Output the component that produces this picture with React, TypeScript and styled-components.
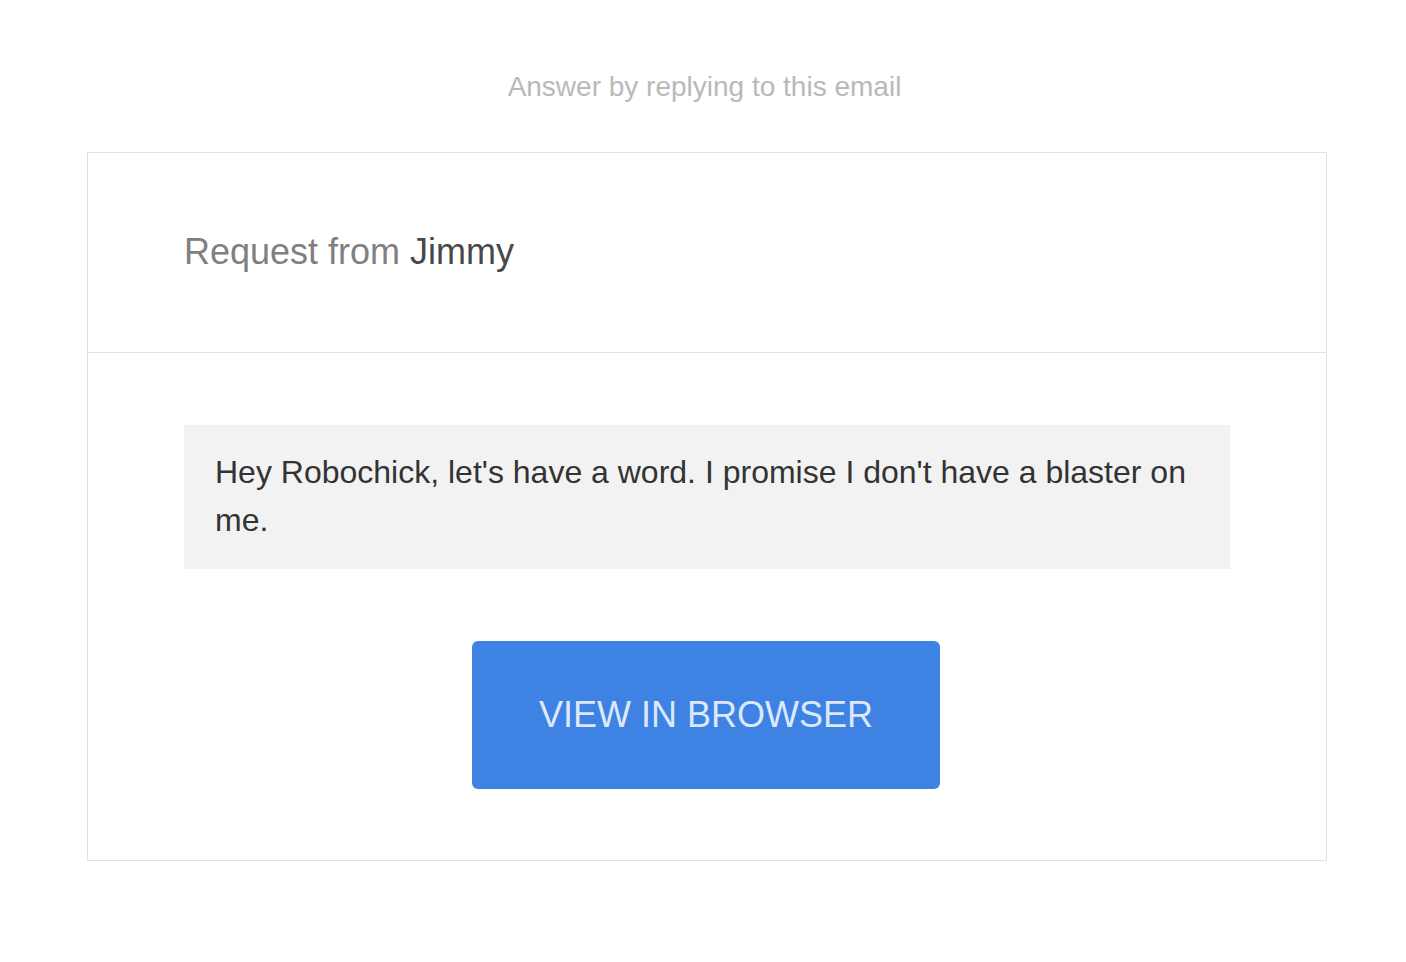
import { createGlobalStyle } from 'styled-components'
import styled from 'styled-components'

const GlobalStyle = createGlobalStyle`
  html, body {
    margin: 0;
    padding: 0;
    background: #ffffff;
    font-family: "Liberation Sans", Arial, Helvetica, sans-serif;
  }
`

const Page = styled.div`
  width: 1240px;
  margin-left: 87px;
  padding-top: 71px;
  padding-bottom: 100px;
`

const ReplyHint = styled.p`
  margin: 0 0 49px;
  padding-right: 5px;
  text-align: center;
  font-size: 28px;
  color: #b9b9b9;
`

const Card = styled.div`
  border: 1px solid #e0e0e0;
  background: #ffffff;
`

const CardHeader = styled.div`
  display: flex;
  align-items: center;
  height: 197px;
  padding: 0 96px 2px;
  border-bottom: 1px solid #e0e0e0;
`

const HeaderTitle = styled.h2`
  margin: 0;
  font-size: 36px;
  font-weight: 400;
  color: #808080;
`

const Sender = styled.span`
  color: #484848;
`

const CardBody = styled.div`
  display: flex;
  flex-direction: column;
  align-items: center;
  gap: 72px;
  padding: 72px 96px 71px;
`

const MessageBox = styled.div`
  align-self: stretch;
  padding: 23px 31px 25px;
  background: #f2f2f2;
  font-size: 32px;
  line-height: 48px;
  color: #333333;
`

const BrowserButton = styled.a`
  display: flex;
  align-items: center;
  justify-content: center;
  width: 468px;
  height: 148px;
  margin-right: 2px;
  border-radius: 6px;
  background: #3e82e4;
  color: #dce8fb;
  font-size: 36px;
  text-decoration: none;
  text-transform: uppercase;
  cursor: pointer;
`

export default function App() {
  return (
    <>
      <GlobalStyle />
      <Page>
        <ReplyHint>Answer by replying to this email</ReplyHint>
        <Card>
          <CardHeader>
            <HeaderTitle>
              Request from <Sender>Jimmy</Sender>
            </HeaderTitle>
          </CardHeader>
          <CardBody>
            <MessageBox>
              Hey Robochick, let's have a word. I promise I don't have a blaster on me.
            </MessageBox>
            <BrowserButton>View in browser</BrowserButton>
          </CardBody>
        </Card>
      </Page>
    </>
  )
}
